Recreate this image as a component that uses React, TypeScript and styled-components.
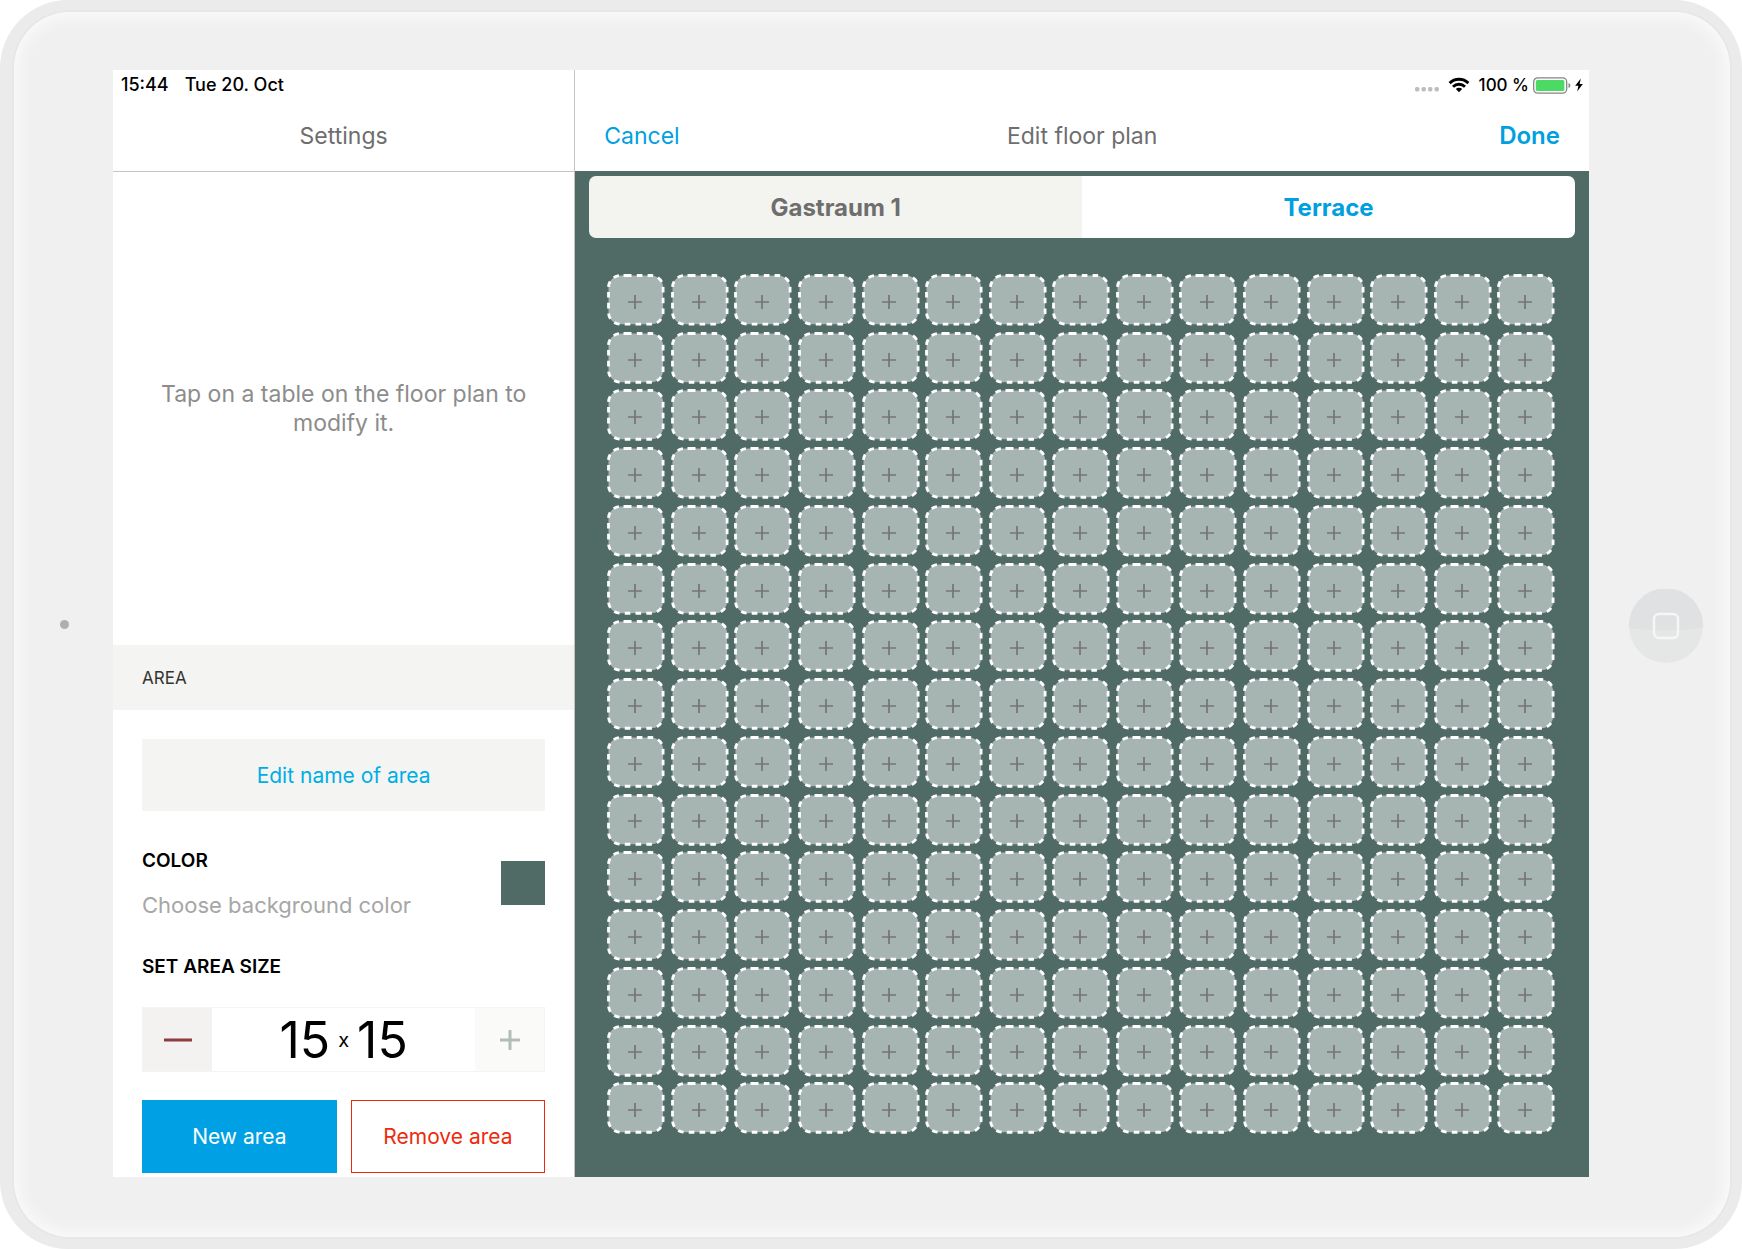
import React, { useState } from "react";
import styled, { createGlobalStyle } from "styled-components";

const color = {
  accent: "#00a1e4",
  accentText: "#00a0e0",
  danger: "#ee2a0c",
  floor: "#506b65",
  cell: "#a7b5b2",
  panel: "#f4f4f2",
  line: "#c4c4c4",
  muted: "#6e6e6e",
};

const GlobalStyle = createGlobalStyle`
  *, *::before, *::after { box-sizing: border-box; }
  body {
    margin: 0;
    background: #fff;
    font-family: Inter, "Liberation Sans", sans-serif;
    color: #000;
  }
  button {
    font: inherit;
    color: inherit;
    border: 0;
    padding: 0;
    background: none;
    cursor: pointer;
  }
  h1, h2, h3, p { margin: 0; font-weight: 400; }
`;

/* ---------- tablet ---------- */

const Tablet = styled.div`
  display: flex;
  min-height: 100vh;
  padding: 12px 12px 12px 14px;
  border-radius: 68px;
  background: #ebebeb;
`;

const Bezel = styled.div`
  flex: 1;
  display: grid;
  grid-template-columns: 99px minmax(0, 1fr) 141px;
  align-items: center;
  padding: 58px 0 60px;
  border-radius: 56px;
  background: #f0f0f0;
  box-shadow: 0 0 0 2px #e7e7e7, inset 0 0 16px 3px #fcfcfc;
`;

const Camera = styled.span`
  justify-self: center;
  width: 9px;
  height: 9px;
  margin: 2px 0 0 2px;
  border-radius: 50%;
  background: #b2aeae;
`;

const HomeButton = styled.button`
  justify-self: end;
  margin: 4px 27px 0 0;
  width: 74px;
  height: 74px;
  border-radius: 50%;

  svg { display: block; }
`;

const Screen = styled.div`
  align-self: stretch;
  display: grid;
  grid-template-columns: minmax(0, 5fr) minmax(0, 11fr);
  background: #fff;
`;

/* ---------- headers ---------- */

const Header = styled.header<{ $ruled?: boolean }>`
  display: flex;
  flex-direction: column;
  height: ${(p) => (p.$ruled ? 102 : 101)}px;
  border-bottom: ${(p) => (p.$ruled ? `1px solid ${color.line}` : "0")};
  background: #fff;
`;

const StatusBar = styled.div<{ $end?: boolean }>`
  display: flex;
  align-items: center;
  justify-content: ${(p) => (p.$end ? "flex-end" : "flex-start")};
  gap: ${(p) => (p.$end ? 4 : 16)}px;
  height: 30px;
  padding: 0 6px 0 8px;
  font-size: ${(p) => (p.$end ? 17 : 18)}px;
  line-height: 30px;
  font-weight: 500;
  white-space: nowrap;

  svg { display: block; }
`;

const BatteryLabel = styled.span`
  margin-left: 1px;
`;

const NavBar = styled.div`
  display: grid;
  grid-template-columns: 1fr auto 1fr;
  align-items: center;
  height: 71px;
  padding: 0 29px;
`;

const NavTitle = styled.h1`
  grid-column: 2;
  font-size: 23px;
  line-height: 30px;
  color: ${color.muted};
`;

const NavButton = styled.button<{ $primary?: boolean }>`
  justify-self: ${(p) => (p.$primary ? "end" : "start")};
  font-size: ${(p) => (p.$primary ? 24 : 23)}px;
  line-height: 30px;
  font-weight: ${(p) => (p.$primary ? 600 : 400)};
  color: ${color.accentText};
`;

/* ---------- sidebar ---------- */

const Sidebar = styled.aside`
  display: flex;
  flex-direction: column;
`;

const Hint = styled.div`
  flex: 1;
  display: flex;
  align-items: center;
  justify-content: center;
  padding: 0 40px;
  font-size: 23px;
  line-height: 29px;
  text-align: center;
  color: #8c8c8c;
`;

const SectionTitle = styled.h2`
  height: 65px;
  padding: 0 29px;
  background: ${color.panel};
  font-size: 17px;
  line-height: 66px;
  color: #333;
`;

const AreaForm = styled.div`
  display: flex;
  flex-direction: column;
  padding: 29px 29px 4px;
`;

const PlainButton = styled.button`
  height: 72px;
  background: ${color.panel};
  font-size: 21px;
  color: #00aee6;
`;

const ColorRow = styled.div`
  display: flex;
  align-items: flex-start;
  justify-content: space-between;
  margin: 38px 0 35px;
`;

const FieldTitle = styled.h3`
  font-size: 19px;
  line-height: 24px;
  font-weight: 600;
`;

const FieldHint = styled.p`
  margin-top: 17px;
  font-size: 22px;
  line-height: 30px;
  color: #a6a6a6;
`;

const Swatch = styled.button`
  width: 44px;
  height: 44px;
  margin-top: 12px;
  background: ${color.floor};
`;

const Stepper = styled.div`
  display: grid;
  grid-template-columns: 69px 1fr 69px;
  height: 65px;
  margin: 28px 0;
  border: 1px solid ${color.panel};
`;

const StepButton = styled.button<{ $faded?: boolean }>`
  display: flex;
  align-items: center;
  justify-content: center;
  background: ${(p) => (p.$faded ? "#fafaf8" : "#f3f2f0")};
`;

const SizeValue = styled.output`
  display: flex;
  align-items: center;
  justify-content: center;
  gap: 8px;
  font-size: 50px;
  line-height: 62px;
`;

const Times = styled.span`
  font-size: 20px;
  line-height: 24px;
`;

const Actions = styled.div`
  display: grid;
  grid-template-columns: 1fr 1fr;
  gap: 14px;
`;

const ActionButton = styled.button<{ $danger?: boolean }>`
  height: 73px;
  border: 1px solid ${(p) => (p.$danger ? color.danger : color.accent)};
  background: ${(p) => (p.$danger ? "#fff" : color.accent)};
  color: ${(p) => (p.$danger ? color.danger : "#fff")};
  font-size: 21px;
`;

/* ---------- floor plan ---------- */

const Editor = styled.main`
  display: flex;
  flex-direction: column;
  border-left: 1px solid ${color.line};
`;

const Floor = styled.div`
  flex: 1;
  display: flex;
  flex-direction: column;
  padding: 5px 14px 43px;
  background: ${color.floor};
`;

const Tabs = styled.div`
  display: grid;
  grid-template-columns: 1fr 1fr;
  height: 62px;
  border-radius: 7px;
  overflow: hidden;
`;

const Tab = styled.button<{ $active: boolean }>`
  background: ${(p) => (p.$active ? "#f3f3ef" : "#fff")};
  color: ${(p) => (p.$active ? color.muted : color.accentText)};
  font-size: 24px;
  font-weight: 700;
`;

const Grid = styled.div`
  flex: 1;
  display: grid;
  grid-template-columns: repeat(15, minmax(0, 1fr));
  grid-auto-rows: minmax(0, 1fr);
  gap: 6px;
  margin: 36px 20px 0 18px;
`;

const CellButton = styled.button`
  position: relative;
  display: flex;
  align-items: center;
  justify-content: center;
  padding: 4px 2px 0 0;
  min-height: 40px;
`;

const Outline = styled.svg`
  position: absolute;
  inset: 0;
  width: 100%;
  height: 100%;
  overflow: visible;

  rect {
    width: calc(100% - 3px);
    height: calc(100% - 3px);
    fill: ${color.cell};
    stroke: #fff;
    stroke-width: 2.8px;
  }
`;

const PlusMark = styled.svg`
  position: relative;
`;

/* one long dash where the outline starts, then even dashes round the cell */
const DASHES = "8 5.3 " + Array(16).fill("5.6 5.2").join(" ");

function Cell({ row, column }: { row: number; column: number }) {
  return (
    <CellButton aria-label={`Add table at row ${row}, column ${column}`}>
      <Outline aria-hidden="true">
        <rect x="1.5" y="1.5" rx="12" strokeDasharray={DASHES} strokeDashoffset="-3" />
      </Outline>
      <PlusMark width="14" height="14" viewBox="0 0 14 14" aria-hidden="true">
        <path d="M7 0V14M0 7H14" stroke="#777474" strokeWidth="1.7" />
      </PlusMark>
    </CellButton>
  );
}

function SignalDots() {
  return (
    <svg width="26" height="16" viewBox="0 0 26 16" aria-hidden="true">
      {[0, 1, 2, 3].map((i) => (
        <rect key={i} x={1 + i * 6.5} y="10" width="4.4" height="4.4" rx="1.6" fill="#bdbdbd" />
      ))}
    </svg>
  );
}

function WifiIcon() {
  return (
    <svg width="30" height="16" viewBox="0 0 30 16" aria-hidden="true">
      <g fill="none" stroke="#000" strokeWidth="2.9">
        <path d="M5.6 6.1A13.4 13.4 0 0 1 24.4 6.1" />
        <path d="M9 9.7A8.6 8.6 0 0 1 21 9.7" />
      </g>
      <path d="M15 15.3L11.8 12.1A4.5 4.5 0 0 1 18.2 12.1Z" />
    </svg>
  );
}

function BatteryIcon() {
  return (
    <svg width="38" height="17" viewBox="0 0 38 17" aria-hidden="true">
      <rect x="0.7" y="0.9" width="33" height="15.2" rx="4" fill="#fff" stroke="#858585" strokeWidth="1.3" />
      <rect x="2.8" y="3" width="28.6" height="11" rx="1.6" fill="#4cd964" />
      <path d="M35.5 6C38 6.8 38 10.2 35.5 11Z" fill="#858585" />
    </svg>
  );
}

function BoltIcon() {
  return (
    <svg width="8" height="14" viewBox="0 0 8 14" aria-hidden="true">
      <path d="M5.8 0.4L0.2 7.8H3.4L2.2 13.6L7.8 6H4.6Z" />
    </svg>
  );
}

function HomeIcon() {
  return (
    <svg width="74" height="74" viewBox="0 0 74 74" aria-hidden="true">
      <circle cx="37" cy="37" r="37" fill="#e5e7e6" />
      <path d="M0.1 39A37 37 0 1 1 73.9 39Q37 44 0.1 39Z" fill="#e0e1e3" />
      <rect x="25" y="25" width="24" height="24" rx="5" fill="none" stroke="#f6f6f6" strokeWidth="2.4" />
    </svg>
  );
}

const SIZE = 15;
const AREAS = ["Gastraum 1", "Terrace"];

export default function App() {
  const [active, setActive] = useState(0);

  return (
    <>
      <GlobalStyle />
      <Tablet>
        <Bezel>
          <Camera />
          <Screen>
            <Sidebar>
              <Header $ruled>
                <StatusBar>
                  <span>15:44</span>
                  <span>Tue 20. Oct</span>
                </StatusBar>
                <NavBar>
                  <NavTitle>Settings</NavTitle>
                </NavBar>
              </Header>
              <Hint>
                <p>Tap on a table on the floor plan to modify it.</p>
              </Hint>
              <SectionTitle>AREA</SectionTitle>
              <AreaForm>
                <PlainButton>Edit name of area</PlainButton>
                <ColorRow>
                  <div>
                    <FieldTitle>COLOR</FieldTitle>
                    <FieldHint id="color-hint">Choose background color</FieldHint>
                  </div>
                  <Swatch aria-labelledby="color-hint" />
                </ColorRow>
                <FieldTitle>SET AREA SIZE</FieldTitle>
                <Stepper>
                  <StepButton aria-label="Smaller area">
                    <svg width="30" height="6" viewBox="0 0 30 6" aria-hidden="true">
                      <path d="M1 3H29" stroke="#8c3b3f" strokeWidth="3" />
                    </svg>
                  </StepButton>
                  <SizeValue>
                    <span>{SIZE}</span>
                    <Times>x</Times>
                    <span>{SIZE}</span>
                  </SizeValue>
                  <StepButton $faded aria-label="Larger area">
                    <svg width="20" height="20" viewBox="0 0 20 20" aria-hidden="true">
                      <path d="M10 0V20M0 10H20" stroke="#b1bdb9" strokeWidth="3" />
                    </svg>
                  </StepButton>
                </Stepper>
                <Actions>
                  <ActionButton>New area</ActionButton>
                  <ActionButton $danger>Remove area</ActionButton>
                </Actions>
              </AreaForm>
            </Sidebar>
            <Editor>
              <Header>
                <StatusBar $end>
                  <SignalDots />
                  <WifiIcon />
                  <BatteryLabel>100 %</BatteryLabel>
                  <BatteryIcon />
                  <BoltIcon />
                </StatusBar>
                <NavBar>
                  <NavButton>Cancel</NavButton>
                  <NavTitle>Edit floor plan</NavTitle>
                  <NavButton $primary>Done</NavButton>
                </NavBar>
              </Header>
              <Floor>
                <Tabs role="tablist">
                  {AREAS.map((name, i) => (
                    <Tab
                      key={name}
                      role="tab"
                      aria-selected={i === active}
                      $active={i === active}
                      onClick={() => setActive(i)}
                    >
                      {name}
                    </Tab>
                  ))}
                </Tabs>
                <Grid>
                  {Array.from({ length: SIZE * SIZE }, (_, i) => (
                    <Cell key={i} row={Math.floor(i / SIZE) + 1} column={(i % SIZE) + 1} />
                  ))}
                </Grid>
              </Floor>
            </Editor>
          </Screen>
          <HomeButton aria-label="Home">
            <HomeIcon />
          </HomeButton>
        </Bezel>
      </Tablet>
    </>
  );
}
